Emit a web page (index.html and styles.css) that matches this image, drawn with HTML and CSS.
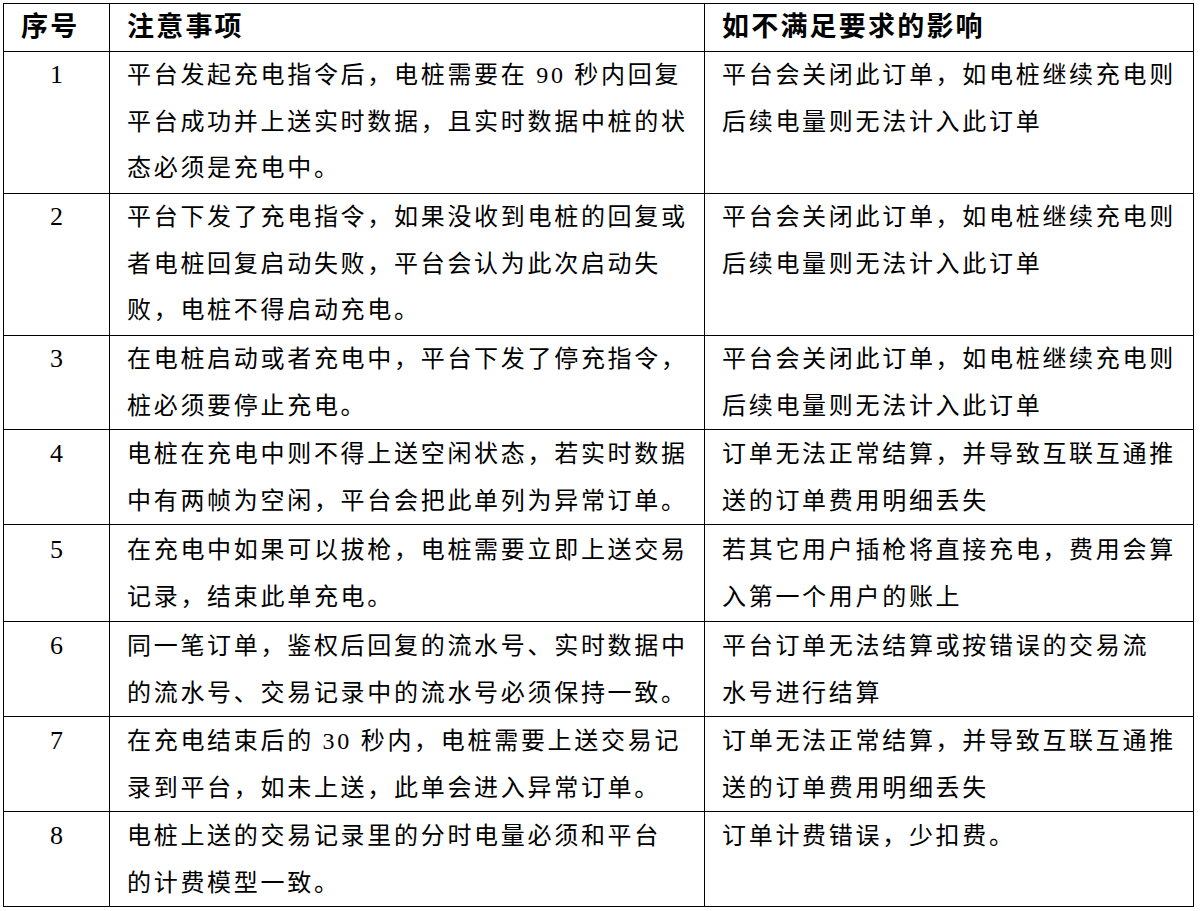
FILE: index.html
```html
<!DOCTYPE html>
<html lang="zh-CN">
<head>
<meta charset="utf-8">
<title>注意事项</title>
<link rel="stylesheet" href="styles.css">
</head>
<body>
<table class="notes">
  <colgroup>
    <col class="c-no">
    <col class="c-item">
    <col class="c-effect">
  </colgroup>
  <thead>
    <tr class="r-head">
      <th>序号</th>
      <th>注意事项</th>
      <th>如不满足要求的影响</th>
    </tr>
  </thead>
  <tbody>
    <tr class="r-3">
      <td class="no">1</td>
      <td>平台发起充电指令后，电桩需要在 90 秒内回复<br>平台成功并上送实时数据，且实时数据中桩的状<br>态必须是充电中。</td>
      <td>平台会关闭此订单，如电桩继续充电则<br>后续电量则无法计入此订单</td>
    </tr>
    <tr class="r-3">
      <td class="no">2</td>
      <td>平台下发了充电指令，如果没收到电桩的回复或<br>者电桩回复启动失败，平台会认为此次启动失<br>败，电桩不得启动充电。</td>
      <td>平台会关闭此订单，如电桩继续充电则<br>后续电量则无法计入此订单</td>
    </tr>
    <tr class="r-2">
      <td class="no">3</td>
      <td>在电桩启动或者充电中，平台下发了停充指令，<br>桩必须要停止充电。</td>
      <td>平台会关闭此订单，如电桩继续充电则<br>后续电量则无法计入此订单</td>
    </tr>
    <tr class="r-2b">
      <td class="no">4</td>
      <td>电桩在充电中则不得上送空闲状态，若实时数据<br>中有两帧为空闲，平台会把此单列为异常订单。</td>
      <td>订单无法正常结算，并导致互联互通推<br>送的订单费用明细丢失</td>
    </tr>
    <tr class="r-2c">
      <td class="no">5</td>
      <td>在充电中如果可以拔枪，电桩需要立即上送交易<br>记录，结束此单充电。</td>
      <td>若其它用户插枪将直接充电，费用会算<br>入第一个用户的账上</td>
    </tr>
    <tr class="r-2b">
      <td class="no">6</td>
      <td>同一笔订单，鉴权后回复的流水号、实时数据中<br>的流水号、交易记录中的流水号必须保持一致。</td>
      <td>平台订单无法结算或按错误的交易流<br>水号进行结算</td>
    </tr>
    <tr class="r-2b">
      <td class="no">7</td>
      <td>在充电结束后的 30 秒内，电桩需要上送交易记<br>录到平台，如未上送，此单会进入异常订单。</td>
      <td>订单无法正常结算，并导致互联互通推<br>送的订单费用明细丢失</td>
    </tr>
    <tr class="r-2b">
      <td class="no">8</td>
      <td>电桩上送的交易记录里的分时电量必须和平台<br>的计费模型一致。</td>
      <td>订单计费错误，少扣费。</td>
    </tr>
  </tbody>
</table>
</body>
</html>
```

FILE: styles.css
```css
html, body {
  margin: 0;
  padding: 0;
  background: #ffffff;
}

body {
  padding: 3px 0 0 3px;
}

.notes {
  border-collapse: collapse;
  table-layout: fixed;
  width: 1190px;
  color: #000000;
  font-family: "Liberation Serif", "Noto Sans CJK SC", serif;
}

.c-no { width: 106px; }
.c-item { width: 595px; }
.c-effect { width: 489px; }

.notes th,
.notes td {
  border: 1px solid #000000;
  padding: 0 0 0 17px;
  text-align: left;
  white-space: nowrap;
  overflow: hidden;
}

.notes th {
  height: 47px;
  font-size: 27px;
  font-weight: 700;
  letter-spacing: 2.2px;
  line-height: 47px;
  vertical-align: middle;
}

.notes td {
  vertical-align: top;
  font-size: 24px;
  letter-spacing: 2.7px;
  line-height: 46.7px;
  padding-top: 0;
}

.notes td.no {
  padding-left: 0;
  text-align: center;
  letter-spacing: 0;
  font-size: 26px;
}

.r-3 td { height: 141px; }
.r-2 td { height: 92px; }
.r-2b td { height: 93px; padding-top: 1px; line-height: 46.5px; }
.r-2c td { height: 94px; padding-top: 2px; line-height: 46.5px; }
```
